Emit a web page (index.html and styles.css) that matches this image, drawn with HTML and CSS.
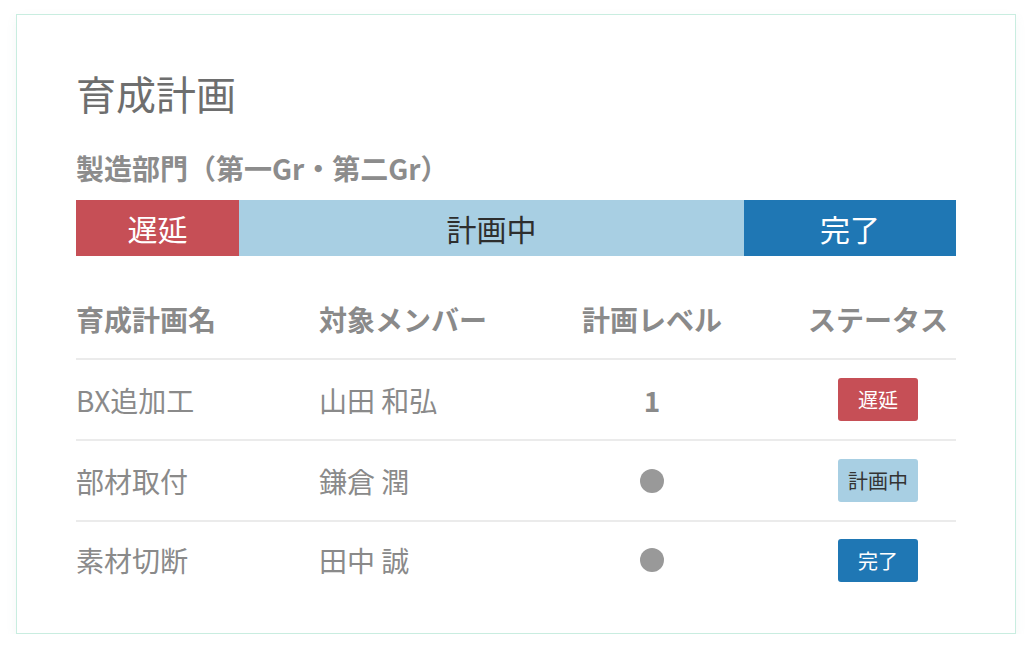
FILE: index.html
```html
<!DOCTYPE html>
<html>
<head>
  <title>育成計画</title>
  <link rel="stylesheet" href="styles.css">
</head>
<body>
  <div class="card">
    <h1>育成計画</h1>
    <h2>製造部門（第一Gr・第二Gr）</h2>

    <div class="status-bar">
      <div class="seg seg-delay" style="width: 163px;">遅延</div>
      <div class="seg seg-plan" style="width: 505px;">計画中</div>
      <div class="seg seg-done" style="width: 212px;">完了</div>
    </div>

    <div class="plan-table">
      <div class="row head">
        <div>育成計画名</div>
        <div>対象メンバー</div>
        <div class="center">計画レベル</div>
        <div class="center">ステータス</div>
      </div>
      <div class="row">
        <div>BX追加工</div>
        <div>山田 和弘</div>
        <div class="center level">1</div>
        <div class="center"><span class="badge badge-delay">遅延</span></div>
      </div>
      <div class="row">
        <div>部材取付</div>
        <div>鎌倉 潤</div>
        <div class="center"><span class="dot"></span></div>
        <div class="center"><span class="badge badge-plan">計画中</span></div>
      </div>
      <div class="row last">
        <div>素材切断</div>
        <div>田中 誠</div>
        <div class="center"><span class="dot"></span></div>
        <div class="center"><span class="badge badge-done">完了</span></div>
      </div>
    </div>
  </div>
</body>
</html>
```

FILE: styles.css
```css
body {
  font-family: "Noto Sans CJK JP", "Noto Sans", sans-serif;
  background-color: #fff;
  margin: 0;
  padding: 14px 0 0 16px;
}

.card {
  box-sizing: border-box;
  width: 1000px;
  height: 620px;
  padding: 54px 59px 0 59px;
  border: 1px solid #c9ede0;
  background-color: #fff;
  box-shadow: 0 4px 10px rgba(120, 150, 140, 0.08);
}

h1 {
  margin: 0;
  font-size: 40px;
  line-height: 48px;
  font-weight: 400;
  color: #6e6e6e;
}

h2 {
  margin: 34px 0 15px 0;
  font-size: 28px;
  line-height: 34px;
  font-weight: 700;
  color: #8c8c8c;
}

.status-bar {
  display: flex;
  height: 56px;
}

.seg {
  display: flex;
  align-items: center;
  justify-content: center;
  font-size: 30px;
}

.seg-delay {
  background-color: #c64f56;
  color: #fff;
}

.seg-plan {
  background-color: #a8cfe3;
  color: #2e2e2e;
}

.seg-done {
  background-color: #1f77b4;
  color: #fff;
}

.plan-table {
  margin-top: 24px;
}

.row {
  display: grid;
  grid-template-columns: 243px 185px 1fr 156px;
  align-items: center;
  height: 79px;
  border-bottom: 2px solid #ebebeb;
  font-size: 28px;
  color: #8a8a8a;
}

.row.head {
  height: 78px;
  font-weight: 700;
}

.row.last {
  height: 76px;
  border-bottom: none;
}

.center {
  text-align: center;
}

.level {
  font-weight: 700;
}

.dot {
  display: block;
  margin: 0 auto;
  width: 24px;
  height: 24px;
  border-radius: 50%;
  background-color: #999;
}

.badge {
  display: block;
  margin: 0 auto;
  width: 80px;
  height: 43px;
  line-height: 43px;
  border-radius: 3px;
  font-size: 20px;
  text-align: center;
}

.badge-delay {
  background-color: #c64f56;
  color: #fff;
}

.badge-plan {
  background-color: #a8cfe3;
  color: #333;
}

.badge-done {
  background-color: #1f77b4;
  color: #fff;
}
```
